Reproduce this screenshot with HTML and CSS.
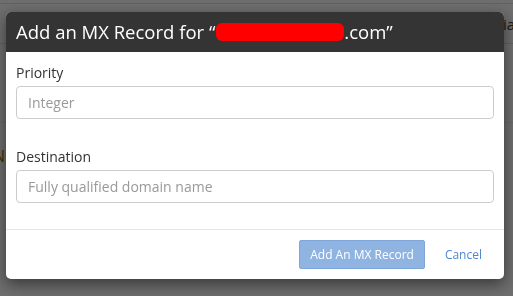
FILE: index.html
```html
<!DOCTYPE html>
<html lang="en">
<head>
    <meta charset="UTF-8">
    <meta name="viewport" content="width=device-width, initial-scale=1.0">
    <title>Add an MX Record</title>
    <link rel="stylesheet" href="styles.css">
</head>
<body>

<!-- Page behind the dialog -->
<div class="page">
    <div class="topbar">
        <span class="topbar-item">ia</span>
    </div>
    <div class="page-row">N</div>
</div>

<div class="backdrop"></div>

<!-- MX record dialog -->
<div class="modal-wrap">
    <div class="modal">
        <div class="modal-header">
            <h3>Add an MX Record for &ldquo;<span class="redacted">t</span>.com&rdquo;</h3>
        </div>
        <form class="modal-body" id="mxForm">
            <div class="form-group">
                <label for="mxPriority">Priority</label>
                <input type="text" id="mxPriority" placeholder="Integer">
            </div>
            <div class="form-group">
                <label for="mxDestination">Destination</label>
                <input type="text" id="mxDestination" placeholder="Fully qualified domain name">
            </div>
        </form>
        <div class="modal-footer">
            <button type="submit" form="mxForm" class="btn-primary" disabled>Add An MX Record</button>
            <a href="#" class="btn-link">Cancel</a>
        </div>
    </div>
</div>

</body>
</html>
```

FILE: styles.css
```css
html, body {
    margin: 0;
    height: 100%;
}
body {
    font-family: "Open Sans", "Liberation Sans", sans-serif;
    background-color: #dcdcdc;
    overflow: hidden;
}
.page {
    padding-top: 3px;
    overflow: hidden;
}
.topbar {
    height: 39px;
    border-top: 1px solid #e6c85c;
    border-bottom: 1px solid #e6c85c;
    display: flex;
    align-items: center;
    font-size: 15px;
    color: #333;
}
.topbar-item {
    margin-left: 503px;
    white-space: nowrap;
}
.page-row {
    margin-top: 78px;
    font-size: 16px;
    color: #8a5a10;
    margin-left: -7px;
    border-top: 1px solid #d0d0d0;
    padding-top: 22px;
}
.backdrop {
    position: fixed;
    inset: 0;
    background-color: rgba(0,0,0,0.5);
}
.modal-wrap {
    position: fixed;
    inset: 0;
    padding: 12px 0 0 6px;
}
.modal {
    width: 498px;
    background-color: #fff;
    border-radius: 5px;
    box-shadow: 0 5px 15px rgba(0,0,0,0.5);
    overflow: hidden;
}
.modal-header {
    background-color: #343434;
    height: 40px;
    display: flex;
    align-items: center;
    padding: 0 10px;
}
.modal-header h3 {
    margin: 0;
    font-size: 18.5px;
    font-weight: normal;
    color: #fff;
    line-height: 24px;
    white-space: nowrap;
}
.redacted {
    display: inline-block;
    width: 128px;
    height: 18px;
    vertical-align: -3px;
    margin-left: 1px;
    background-color: #f00;
    border-radius: 6px;
    color: transparent;
}
.modal-body {
    padding: 11px 10px 26px;
    border-bottom: 1px solid #e5e5e5;
}
.form-group + .form-group {
    margin-top: 28px;
}
label {
    display: block;
    font-size: 14px;
    line-height: 20px;
    color: #333;
    margin-bottom: 3px;
}
input[type="text"] {
    display: block;
    box-sizing: border-box;
    width: 100%;
    height: 33px;
    padding: 6px 11px;
    font-family: inherit;
    font-size: 14px;
    color: #333;
    border: 1px solid #ccc;
    border-radius: 4px;
    outline: none;
}
input::placeholder {
    color: #999;
}
.modal-footer {
    display: flex;
    justify-content: flex-end;
    align-items: center;
    padding: 10px 12px 10px;
}
.btn-primary {
    font-family: inherit;
    font-size: 12px;
    height: 29px;
    padding: 0 10px;
    white-space: nowrap;
    color: #fff;
    background-color: #8fb4e2;
    border: 1px solid #7fa6da;
    border-radius: 2px;
}
.btn-link {
    font-size: 12px;
    color: #4f86d0;
    text-decoration: none;
    margin-left: 20px;
    margin-right: 10px;
}
```
